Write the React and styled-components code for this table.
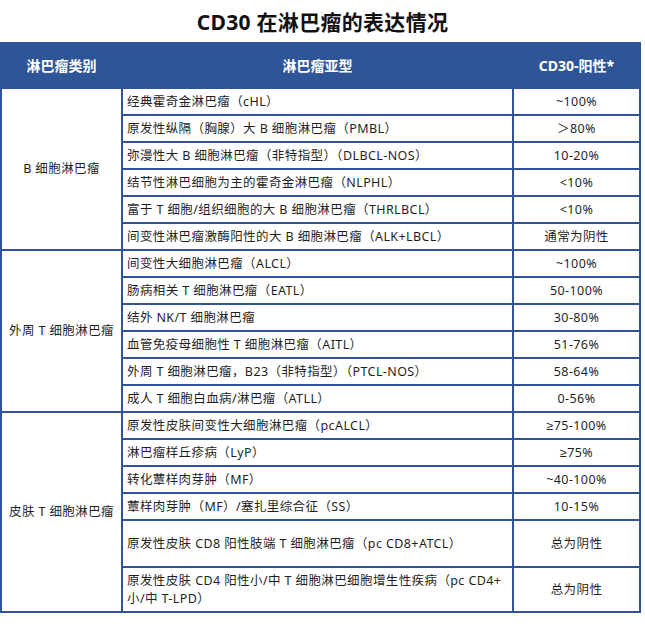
import React from "react";
import styled, { createGlobalStyle } from "styled-components";

const Global = createGlobalStyle`
  html, body { margin: 0; padding: 0; background: #fff; }
  body { font-family: "Noto Sans", "Liberation Sans", "Noto Sans CJK SC", sans-serif; color: #1f1f1f; }
`;

const Page = styled.div`
  width: 645px;
  height: 628px;
  overflow: hidden;
  background: #fff;
`;

const Title = styled.h1`
  margin: 0;
  height: 42px;
  display: flex;
  align-items: center;
  justify-content: center;
  font-size: 21px;
  font-weight: 700;
  color: #111;
  letter-spacing: 0.3px;
`;

const Table = styled.table`
  width: 639px;
  border-collapse: collapse;
  table-layout: fixed;
  font-size: 12.5px;
  line-height: 18px;
`;

const Col = styled.col`
  width: ${(p) => p.$w}px;
`;

const HeadRow = styled.tr`
  height: 45px;
  background: #2f5597;
`;

const Th = styled.th`
  border: 2px solid #2f5597;
  color: #fff;
  font-size: 14px;
  font-weight: 700;
  text-align: center;
  padding: 0;
`;

const Row = styled.tr`
  height: ${(p) => p.$h || 27}px;
`;

const Cell = styled.td`
  border: 2px solid #2f5597;
  padding: 0 4px;
  vertical-align: middle;
  text-align: ${(p) => p.$align || "left"};
  letter-spacing: 0.4px;
`;

const groups = [
  {
    name: "B 细胞淋巴瘤",
    rows: [
      ["经典霍奇金淋巴瘤（cHL）", "~100%"],
      ["原发性纵隔（胸腺）大 B 细胞淋巴瘤（PMBL）", "＞80%"],
      ["弥漫性大 B 细胞淋巴瘤（非特指型）（DLBCL-NOS）", "10-20%"],
      ["结节性淋巴细胞为主的霍奇金淋巴瘤（NLPHL）", "<10%"],
      ["富于 T 细胞/组织细胞的大 B 细胞淋巴瘤（THRLBCL）", "<10%"],
      ["间变性淋巴瘤激酶阳性的大 B 细胞淋巴瘤（ALK+LBCL）", "通常为阴性"],
    ],
  },
  {
    name: "外周 T 细胞淋巴瘤",
    rows: [
      ["间变性大细胞淋巴瘤（ALCL）", "~100%"],
      ["肠病相关 T 细胞淋巴瘤（EATL）", "50-100%"],
      ["结外 NK/T 细胞淋巴瘤", "30-80%"],
      ["血管免疫母细胞性 T 细胞淋巴瘤（AITL）", "51-76%"],
      ["外周 T 细胞淋巴瘤，B23（非特指型）（PTCL-NOS）", "58-64%"],
      ["成人 T 细胞白血病/淋巴瘤（ATLL）", "0-56%"],
    ],
  },
  {
    name: "皮肤 T 细胞淋巴瘤",
    rows: [
      ["原发性皮肤间变性大细胞淋巴瘤（pcALCL）", "≥75-100%"],
      ["淋巴瘤样丘疹病（LyP）", "≥75%"],
      ["转化蕈样肉芽肿（MF）", "~40-100%"],
      ["蕈样肉芽肿（MF）/塞扎里综合征（SS）", "10-15%"],
      ["原发性皮肤 CD8 阳性肢端 T 细胞淋巴瘤（pc CD8+ATCL）", "总为阴性", 47],
      ["原发性皮肤 CD4 阳性小/中 T 细胞淋巴细胞增生性疾病（pc CD4+ 小/中 T-LPD）", "总为阴性", 45],
    ],
  },
];

export default function App() {
  return (
    <Page>
      <Global />
      <Title>CD30 在淋巴瘤的表达情况</Title>
      <Table>
        <colgroup>
          <Col $w={121} />
          <Col $w={391} />
          <Col $w={127} />
        </colgroup>
        <thead>
          <HeadRow>
            <Th>淋巴瘤类别</Th>
            <Th>淋巴瘤亚型</Th>
            <Th>CD30-阳性*</Th>
          </HeadRow>
        </thead>
        <tbody>
          {groups.map((g) =>
            g.rows.map(([sub, val, h], i) => (
              <Row key={g.name + i} $h={h}>
                {i === 0 && (
                  <Cell rowSpan={g.rows.length} $align="center">
                    {g.name}
                  </Cell>
                )}
                <Cell>{sub}</Cell>
                <Cell $align="center">{val}</Cell>
              </Row>
            ))
          )}
        </tbody>
      </Table>
    </Page>
  );
}
